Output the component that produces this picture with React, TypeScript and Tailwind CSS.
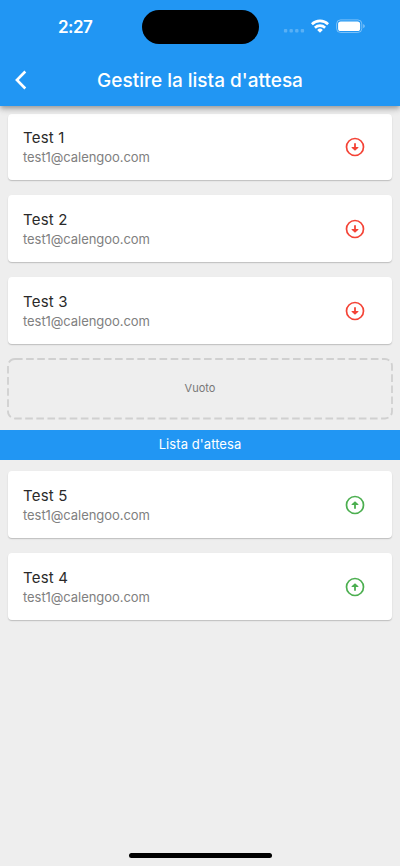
type Person = {
  name: string;
  email: string;
};

const participants: Person[] = [
  { name: "Test 1", email: "test1@calengoo.com" },
  { name: "Test 2", email: "test1@calengoo.com" },
  { name: "Test 3", email: "test1@calengoo.com" },
];

const waitingList: Person[] = [
  { name: "Test 5", email: "test1@calengoo.com" },
  { name: "Test 4", email: "test1@calengoo.com" },
];

function StatusBar() {
  return (
    <div className="flex h-[54px] items-start pt-[10px]">
      <div className="flex h-[34px] w-[142px] items-center pl-[58px] text-[17px] font-semibold leading-none tracking-[-0.5px]">
        2:27
      </div>
      <div className="h-[34px] w-[116.5px] rounded-full bg-black" />
      <svg className="ml-[24.5px] h-[34px] w-[84px]" viewBox="283 10 84 34" fill="none">
        <g fill="#fff" fillOpacity="0.25">
          <rect x="283.9" y="29" width="3.4" height="3.4" rx="1" />
          <rect x="289.5" y="29" width="3.4" height="3.4" rx="1" />
          <rect x="295.1" y="29" width="3.4" height="3.4" rx="1" />
          <rect x="300.7" y="29" width="3.4" height="3.4" rx="1" />
        </g>
        <g stroke="#fff" strokeWidth="2.6">
          <path d="M311.9 24.2a11.6 11.6 0 0 1 16.2 0" />
          <path d="M314.9 27.7a7.3 7.3 0 0 1 10.2 0" />
        </g>
        <path d="M317.2 29.9a4 4 0 0 1 5.6 0L320 32.8z" fill="#fff" />
        <rect x="336.6" y="19.9" width="25.2" height="12.6" rx="4" stroke="#fff" strokeOpacity="0.4" />
        <rect x="338.1" y="21.4" width="22" height="9.6" rx="2.6" fill="#fff" />
        <path d="M363.3 24.1c1.9.8 1.9 3.4 0 4.2z" fill="#fff" fillOpacity="0.5" />
      </svg>
    </div>
  );
}

function Header() {
  return (
    <header className="relative h-[106px] bg-[#2196f3] text-white shadow-[0_2px_4px_-1px_rgba(0,0,0,0.2),0_4px_5px_rgba(0,0,0,0.14),0_1px_10px_rgba(0,0,0,0.12)]">
      <StatusBar />
      <div className="flex h-[52px] items-center">
        <button type="button" aria-label="Indietro" className="w-[42px] pl-[15px]">
          <svg className="h-[20px] w-[12px]" viewBox="0 0 12 20" fill="none">
            <path d="M10.3 1.5 1.9 10l8.4 8.5" stroke="#fff" strokeWidth="2.6" />
          </svg>
        </button>
        <h1 className="w-[316px] whitespace-nowrap pt-[2px] text-center text-[19px] font-medium">
          Gestire la lista d'attesa
        </h1>
      </div>
    </header>
  );
}

function MoveIcon({ direction }: { direction: "up" | "down" }) {
  return (
    <svg
      className={direction === "up" ? "size-5 rotate-180 text-[#4caf50]" : "size-5 text-[#f44336]"}
      viewBox="0 0 20 20"
      fill="none"
    >
      <circle cx="10" cy="10" r="8.5" stroke="currentColor" strokeWidth="1.7" />
      <path d="M9.1 6.2h1.8v3.9h2.5v.6L10 13.7 6.6 10.7v-.6h2.5z" fill="currentColor" />
    </svg>
  );
}

function PersonCard({ person, direction }: { person: Person; direction: "up" | "down" }) {
  return (
    <div className="flex h-[66.8px] items-center rounded bg-white pl-[15px] pr-[27px] shadow-[0_1px_1px_rgba(0,0,0,0.14),0_1px_2px_rgba(0,0,0,0.08)]">
      <div className="flex-1">
        <div className="text-[15px] leading-[20px] tracking-[0.2px] text-[#2a2a2a]">{person.name}</div>
        <div className="text-[13px] leading-[18px] tracking-[-0.05px] text-[#808080]">{person.email}</div>
      </div>
      <button type="button" aria-label={direction === "up" ? "Sposta su" : "Sposta giù"}>
        <MoveIcon direction={direction} />
      </button>
    </div>
  );
}

function EmptySlot() {
  return (
    <div className="relative mx-[7px] mt-[13.5px] flex h-[62px] items-center justify-center text-[11px] text-[#777]">
      <svg className="absolute inset-0 h-[62px] w-[386px]" viewBox="0 0 386 62" fill="none">
        <path
          d="M8 1H378a7 7 0 0 1 7 7V53.5a7 7 0 0 1-7 7H8a7 7 0 0 1-7-7V8a7 7 0 0 1 7-7"
          stroke="#d0d0d0"
          strokeWidth="1.8"
          strokeDasharray="7.6 3.52"
        />
      </svg>
      <span>Vuoto</span>
    </div>
  );
}

export default function App() {
  return (
    <div className="flex h-[866px] w-[400px] flex-col overflow-hidden bg-[#eee] font-[Inter,sans-serif]">
      <Header />
      <main className="flex-1">
        <div className="flex flex-col gap-[15px] px-2 pt-[7.7px]">
          {participants.map((person) => (
            <PersonCard key={person.name} person={person} direction="down" />
          ))}
        </div>
        <EmptySlot />
        <div className="mt-[10px] flex h-[30.5px] items-center justify-center bg-[#2196f3] text-[13px] tracking-[0.08px] text-white">
          Lista d'attesa
        </div>
        <div className="flex flex-col gap-[15px] px-2 pt-[11.3px]">
          {waitingList.map((person) => (
            <PersonCard key={person.name} person={person} direction="up" />
          ))}
        </div>
      </main>
      <div className="mx-auto mb-[8px] h-[5px] w-[143px] rounded-full bg-black" />
    </div>
  );
}
